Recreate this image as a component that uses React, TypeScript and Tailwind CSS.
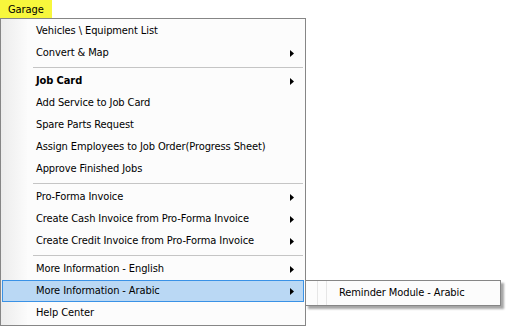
import React from "react";

type Item =
  | { type: "sep" }
  | { type: "item"; label: string; arrow?: boolean; bold?: boolean; active?: boolean };

const items: Item[] = [
  { type: "item", label: "Vehicles \\ Equipment List" },
  { type: "item", label: "Convert & Map", arrow: true },
  { type: "sep" },
  { type: "item", label: "Job Card", arrow: true, bold: true },
  { type: "item", label: "Add Service to Job Card" },
  { type: "item", label: "Spare Parts Request" },
  { type: "item", label: "Assign Employees to Job Order(Progress Sheet)" },
  { type: "item", label: "Approve Finished Jobs" },
  { type: "sep" },
  { type: "item", label: "Pro-Forma Invoice", arrow: true },
  { type: "item", label: "Create Cash Invoice from Pro-Forma Invoice", arrow: true },
  { type: "item", label: "Create Credit Invoice from Pro-Forma Invoice", arrow: true },
  { type: "sep" },
  { type: "item", label: "More Information - English", arrow: true },
  { type: "item", label: "More Information - Arabic", arrow: true, active: true },
  { type: "item", label: "Help Center" },
];

function Arrow() {
  return (
    <svg width="4" height="7" viewBox="0 0 4 7" className="block">
      <polygon points="0,0 4,3.5 0,7" fill="#000" />
    </svg>
  );
}

export default function App() {
  return (
    <div
      className="relative w-[523px] h-[326px] bg-white text-[11px] tracking-[-0.1px] text-black overflow-hidden"
      style={{ fontFamily: "Tahoma, 'DejaVu Sans Condensed', 'DejaVu Sans', sans-serif" }}
    >
      <div className="w-[52px] h-[18px] bg-[#f7f73c] flex items-center pl-[8px] pt-[1px] leading-none">Garage</div>
      <div className="relative w-[306px] h-[308px] border border-[#868686] bg-[#fcfcfc] pt-[1px]">
        <div className="absolute left-0 top-0 bottom-0 w-[26px] bg-gradient-to-r from-[#ececec] to-[#fbfbfb]" />
        <div className="relative flex flex-col">
          {items.map((it, i) =>
            it.type === "sep" ? (
              <div key={i} className="h-[6px] flex items-center pl-[32px] pr-[2px]">
                <div className="h-px w-full bg-[#c5c5c5]" />
              </div>
            ) : (
              <div
                key={i}
                className={
                  "h-[22px] mx-[1px] flex items-center pl-[33px] pr-[9px] pt-[1px] border " +
                  (it.active ? "bg-[#bad8f4] border-[#3a92e6]" : "border-transparent")
                }
              >
                <span className={"flex-1 whitespace-nowrap " + (it.bold ? "font-bold" : "")}>{it.label}</span>
                {it.arrow && <Arrow />}
              </div>
            )
          )}
        </div>
      </div>
      <div className="absolute left-[305px] top-[280px] w-[196px] h-[26px] border border-[#868686] bg-[#fcfcfc] flex items-center shadow-[3px_3px_2px_rgba(0,0,0,0.35)]">
        <div className="w-[11px]" />
        <div className="w-px h-full bg-[#e6e6e6]" />
        <div className="w-[8px]" />
        <div className="w-px h-full bg-[#e6e6e6]" />
        <span className="pl-[12px] pt-[1px] whitespace-nowrap">Reminder Module - Arabic</span>
      </div>
    </div>
  );
}
